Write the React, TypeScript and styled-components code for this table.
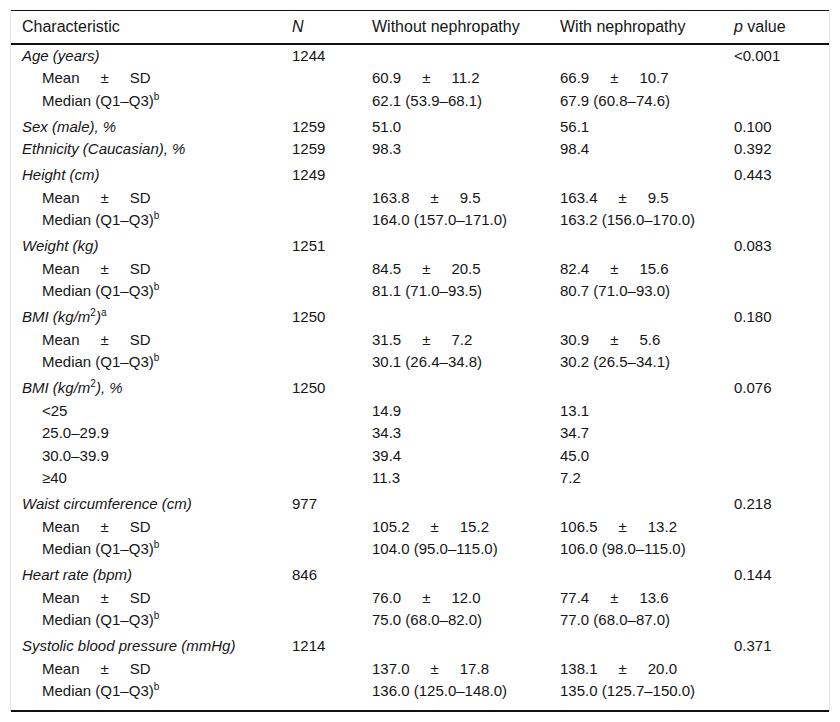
import React from "react";
import styled, { createGlobalStyle } from "styled-components";

const GlobalStyle = createGlobalStyle`
  html, body {
    margin: 0;
    padding: 0;
    background: #fff;
  }
  body {
    font-family: "Liberation Sans", Arial, Helvetica, sans-serif;
    color: #151515;
  }
`;

const Page = styled.div`
  padding: 10px;
`;

const Frame = styled.div`
  width: 818px;
  border-left: 1px solid #e3e3e3;
  border-right: 1px solid #e3e3e3;
`;

const Table = styled.table`
  width: 818px;
  border-collapse: collapse;
  table-layout: fixed;
  font-size: 15px;
`;

const HeadRow = styled.tr`
  border-top: 1px solid #111;
  border-bottom: 2px solid #111;
`;

const Th = styled.th<{ $w: number }>`
  box-sizing: border-box;
  width: ${(p) => p.$w}px;
  height: 33px;
  padding: 0 11px;
  text-align: left;
  font-weight: 400;
  font-size: 16px;
  line-height: 18px;
  vertical-align: middle;
`;

const Row = styled.tr<{ $last?: boolean }>`
  ${(p) => (p.$last ? "border-bottom: 2px solid #111;" : "")}
`;

const Td = styled.td<{
  $lead?: boolean;
  $indent?: boolean;
  $italic?: boolean;
  $last?: boolean;
}>`
  padding: ${(p) => (p.$lead ? "6.5px" : "3px")} 11px
    ${(p) => (p.$last ? "10px" : "3px")}
    ${(p) => (p.$indent ? "31px" : "11px")};
  line-height: 16.5px;
  white-space: nowrap;
  vertical-align: top;
  font-style: ${(p) => (p.$italic ? "italic" : "normal")};
`;

const Sup = styled.sup`
  font-size: 10px;
  line-height: 0;
  vertical-align: 6px;
  font-style: normal;
`;

const Pm = styled.span`
  display: inline-block;
  margin: 0 21px;
`;

const Em = styled.i`
  font-style: italic;
`;

type Cell = React.ReactNode;

type Line = {
  label: Cell;
  n?: string;
  a?: Cell;
  b?: Cell;
  p?: string;
  sub?: boolean;
  tight?: boolean;
};

const ms = (m: string, s: string) => (
  <>
    {m}
    <Pm>±</Pm>
    {s}
  </>
);

const meanRow = (a: [string, string], b: [string, string]): Line => ({
  label: ms("Mean", "SD"),
  a: ms(a[0], a[1]),
  b: ms(b[0], b[1]),
  sub: true,
});

const medianLabel = (
  <>
    Median (Q1–Q3)<Sup>b</Sup>
  </>
);

const medianRow = (a: string, b: string): Line => ({
  label: medianLabel,
  a,
  b,
  sub: true,
});

const lines: Line[] = [
  { label: "Age (years)", n: "1244", p: "<0.001" },
  meanRow(["60.9", "11.2"], ["66.9", "10.7"]),
  medianRow("62.1 (53.9–68.1)", "67.9 (60.8–74.6)"),
  { label: "Sex (male), %", n: "1259", a: "51.0", b: "56.1", p: "0.100" },
  {
    label: "Ethnicity (Caucasian), %",
    n: "1259",
    a: "98.3",
    b: "98.4",
    p: "0.392",
    tight: true,
  },
  { label: "Height (cm)", n: "1249", p: "0.443" },
  meanRow(["163.8", "9.5"], ["163.4", "9.5"]),
  medianRow("164.0 (157.0–171.0)", "163.2 (156.0–170.0)"),
  { label: "Weight (kg)", n: "1251", p: "0.083" },
  meanRow(["84.5", "20.5"], ["82.4", "15.6"]),
  medianRow("81.1 (71.0–93.5)", "80.7 (71.0–93.0)"),
  {
    label: (
      <>
        BMI (kg/m<Sup>2</Sup>)<Sup>a</Sup>
      </>
    ),
    n: "1250",
    p: "0.180",
  },
  meanRow(["31.5", "7.2"], ["30.9", "5.6"]),
  medianRow("30.1 (26.4–34.8)", "30.2 (26.5–34.1)"),
  {
    label: (
      <>
        BMI (kg/m<Sup>2</Sup>), %
      </>
    ),
    n: "1250",
    p: "0.076",
  },
  { label: "<25", a: "14.9", b: "13.1", sub: true },
  { label: "25.0–29.9", a: "34.3", b: "34.7", sub: true },
  { label: "30.0–39.9", a: "39.4", b: "45.0", sub: true },
  { label: "≥40", a: "11.3", b: "7.2", sub: true },
  { label: "Waist circumference (cm)", n: "977", p: "0.218" },
  meanRow(["105.2", "15.2"], ["106.5", "13.2"]),
  medianRow("104.0 (95.0–115.0)", "106.0 (98.0–115.0)"),
  { label: "Heart rate (bpm)", n: "846", p: "0.144" },
  meanRow(["76.0", "12.0"], ["77.4", "13.6"]),
  medianRow("75.0 (68.0–82.0)", "77.0 (68.0–87.0)"),
  { label: "Systolic blood pressure (mmHg)", n: "1214", p: "0.371" },
  meanRow(["137.0", "17.8"], ["138.1", "20.0"]),
  medianRow("136.0 (125.0–148.0)", "135.0 (125.7–150.0)"),
];

export default function App() {
  return (
    <>
      <GlobalStyle />
      <Page>
        <Frame>
          <Table>
            <thead>
              <HeadRow>
                <Th $w={270}>Characteristic</Th>
                <Th $w={80}>
                  <Em>N</Em>
                </Th>
                <Th $w={188}>Without nephropathy</Th>
                <Th $w={174}>With nephropathy</Th>
                <Th $w={106}>
                  <Em>p</Em> value
                </Th>
              </HeadRow>
            </thead>
            <tbody>
              {lines.map((l, i) => {
                const lead = !l.sub && !l.tight && i > 0;
                const last = i === lines.length - 1;
                return (
                  <Row key={i} $last={last}>
                    <Td
                      $lead={lead}
                      $last={last}
                      $indent={l.sub}
                      $italic={!l.sub}
                    >
                      {l.label}
                    </Td>
                    <Td $lead={lead} $last={last}>
                      {l.n}
                    </Td>
                    <Td $lead={lead} $last={last}>
                      {l.a}
                    </Td>
                    <Td $lead={lead} $last={last}>
                      {l.b}
                    </Td>
                    <Td $lead={lead} $last={last}>
                      {l.p}
                    </Td>
                  </Row>
                );
              })}
            </tbody>
          </Table>
        </Frame>
      </Page>
    </>
  );
}
